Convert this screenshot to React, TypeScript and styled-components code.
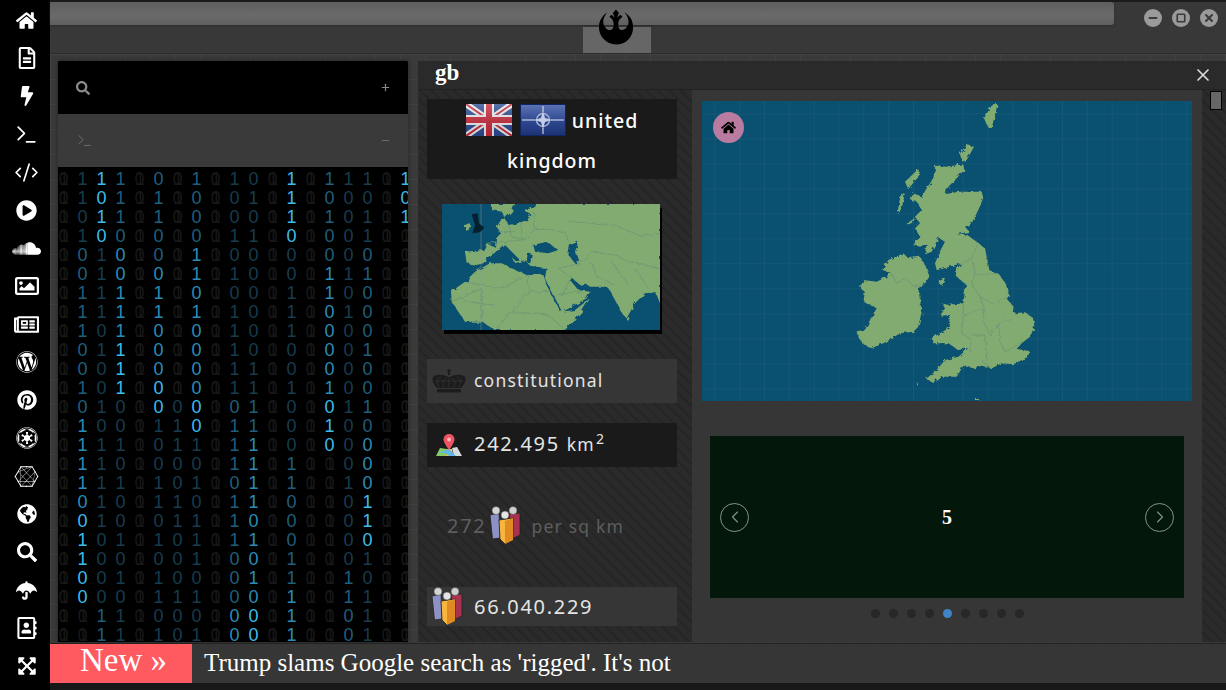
import styled, { createGlobalStyle } from "styled-components";
import {
  FaHome, FaRegFileAlt, FaBolt, FaPlayCircle, FaSoundcloud, FaRegImage, FaRegNewspaper,
  FaWordpress, FaPinterest, FaConnectdevelop, FaGlobeAmericas, FaSearch,
  FaUmbrella, FaRegAddressBook, FaExpandArrowsAlt, FaRebel, FaEmpire,
} from "react-icons/fa";
import { Terminal, CodeXml, Minus, Square, X, Plus, ChevronLeft, ChevronRight } from "lucide-react";

const GlobalStyle = createGlobalStyle`
  html, body { margin: 0; padding: 0; background: #363636; overflow: hidden; }
  * { box-sizing: border-box; }
`;

const HATCH = `repeating-linear-gradient(45deg, #2a2a2a 0 6px, #252525 6px 8px)`;
const LEVELS = ["#171717", "#173c4e", "#1f5f7d", "#2a8db8", "#3cbdec"];

const col = (chars: string, levels: string) => ({ chars, levels });
const blank = () => col("x".repeat(25), "0".repeat(25));

const COLUMNS = [
  blank(),
  col("11010011100101111001100xx", "1111222222222333334444400"),
  col("1010111101001011111000011", "4444" + "1".repeat(19) + "22"),
  col("1110001111110010100101011", "2222" + "33333" + "444" + "1".repeat(13)),
  blank(),
  col("0110001100000100110101101", "22222" + "333333" + "44" + "1".repeat(12)),
  col("x".repeat(12) + "0110011000100", "0".repeat(12) + "1".repeat(13)),
  col("1000110100000010101110101", "2222" + "33333333" + "44" + "1".repeat(11)),
  blank(),
  col("1001010111110111011100000", "1".repeat(12) + "2".repeat(11) + "33"),
  col("0101000000111111110101000", "1".repeat(12) + "22" + "3".repeat(9) + "44"),
  blank(),
  col("1110001110010001100011111", "4444" + "1".repeat(11) + "2".repeat(7) + "333"),
  blank(),
  col("101001100001010" + "x".repeat(10), "22222" + "3333333" + "444" + "0".repeat(10)),
  col("1000010100001000100001100", "1".repeat(21) + "2222"),
  col("1011010001001000011010111", "1111" + "2".repeat(10) + "333" + "444" + "11111"),
  blank(),
  col("101" + "x".repeat(22), "444" + "0".repeat(22)),
];

const NAV_ICONS = [
  <FaHome size={21} />, <FaRegFileAlt size={22} />, <FaBolt size={20} />, <Terminal size={25} strokeWidth={1.6} />,
  <CodeXml size={25} strokeWidth={1.6} />, <FaPlayCircle size={21} />, <FaSoundcloud size={29} />, <FaRegImage size={24} />,
  <FaRegNewspaper size={25} />, <FaWordpress size={22} />, <FaPinterest size={20} />, <FaEmpire size={22} />,
  <FaConnectdevelop size={25} />, <FaGlobeAmericas size={20} />, <FaSearch size={20} />, <FaUmbrella size={21} />,
  <FaRegAddressBook size={22} />, <FaExpandArrowsAlt size={20} />,
];

const Shell = styled.div`
  display: grid;
  grid-template-columns: 50px 1fr;
  grid-template-rows: 690px;
  width: 1226px;
  height: 690px;
  overflow: hidden;
  font-family: "Liberation Serif", serif;
`;
const Sidebar = styled.nav`
  background: #000;
  color: #fff;
  padding-top: 1px;
  display: flex;
  flex-direction: column;
`;
const NavItem = styled.div`
  height: 38px;
  flex: none;
  display: flex;
  align-items: center;
  justify-content: center;
  padding-left: 3px;
`;
const Main = styled.div`
  display: flex;
  flex-direction: column;
  min-width: 0;
  min-height: 0;
`;
const TopBar = styled.header`
  height: 54px;
  flex: none;
  display: flex;
  background: #383838;
  border-top: 2px solid #1d1a1d;
  border-bottom: 1px solid #2c2c2c;
`;
const TitleColumn = styled.div`
  width: 1064px;
  display: flex;
  flex-direction: column;
`;
const TitleStrip = styled.div`
  height: 23px;
  background: linear-gradient(#5f5f5f, #6a6a6a 60%, #606060);
  border-radius: 0 3px 3px 0;
  box-shadow: 0 1px 2px #2c2c2c;
`;
const Tab = styled.div`
  position: relative;
  margin: 2px 0 0 533px;
  width: 68px;
  height: 26px;
  background: #666;
`;
const RebelMark = styled.div`
  position: absolute;
  left: 15px;
  top: -18px;
  color: #000;
  line-height: 0;
`;
const Controls = styled.div`
  margin-left: auto;
  padding: 7px 8px 0 0;
  display: flex;
  gap: 10px;
`;
const ControlButton = styled.div`
  width: 18px;
  height: 18px;
  border-radius: 50%;
  background: #9a9a9a;
  color: #3a3a3a;
  display: flex;
  align-items: center;
  justify-content: center;
`;
const Workspace = styled.div`
  flex: 1;
  min-height: 0;
  display: flex;
  gap: 10px;
  padding: 7px 0 1px 8px;
  background-color: #3a3a3a;
  background-image:
    linear-gradient(rgba(255, 255, 255, 0.035) 1px, transparent 1px),
    linear-gradient(90deg, rgba(255, 255, 255, 0.035) 1px, transparent 1px);
  background-size: 25px 25px;
`;
const LeftPanel = styled.section`
  width: 350px;
  flex: none;
  display: flex;
  flex-direction: column;
  background: #000;
  overflow: hidden;
  border-radius: 2px 2px 0 0;
  box-shadow: 0 0 4px #222;
`;
const PanelRow = styled.div<{ $active?: boolean }>`
  height: 53px;
  flex: none;
  padding: 0 17px 0 18px;
  display: flex;
  align-items: center;
  justify-content: space-between;
  color: ${(p) => (p.$active ? "#6d6d6d" : "#8a8a8a")};
  background: ${(p) => (p.$active ? "#3a3a3a" : "#000")};
`;
const Matrix = styled.div`
  display: grid;
  grid-auto-flow: column;
  grid-template-rows: repeat(25, 19px);
  grid-auto-columns: 19px;
  padding-top: 3px;
  margin-left: -4px;
  font: 18px/19px "Liberation Sans", sans-serif;
`;
const Bit = styled.span<{ $level: number }>`
  position: relative;
  text-align: center;
  color: ${(p) => LEVELS[p.$level]};
`;
const BitGhost = styled.span`
  position: absolute;
  left: 1px;
  right: 0;
  top: 0;
`;
const RightPanel = styled.section`
  flex: 1;
  min-width: 0;
  min-height: 0;
  display: flex;
  flex-direction: column;
  border-left: 1px solid #2a2a2a;
`;
const PanelHeader = styled.div`
  height: 29px;
  flex: none;
  display: flex;
  align-items: center;
  justify-content: space-between;
  padding: 0 13px 0 16px;
  background: #2a2a2a;
  color: #fff;
  border-bottom: 1px solid #222;
`;
const PanelTitle = styled.h2`
  margin: 0;
  padding-bottom: 6px;
  font: bold 23px/23px "Liberation Serif", serif;
`;
const PanelBody = styled.div`
  flex: 1;
  min-height: 0;
  display: grid;
  grid-template-columns: 273px 510px 1fr;
`;
const InfoColumn = styled.div`
  background: ${HATCH};
  padding: 9px 15px 0 8px;
  display: flex;
  flex-direction: column;
`;
const CountryTitle = styled.div`
  height: 80px;
  flex: none;
  background: #1a1a1a;
  color: #fff;
  text-align: center;
  font: 500 19.5px/40px "Noto Sans", sans-serif;
  letter-spacing: 1px;
  padding-top: 2px;
`;
const FlagImage = styled.svg`
  width: 46px;
  height: 32px;
  vertical-align: middle;
  margin: -5px 6px 0 0;
  & + & {
    margin-left: 2px;
  }
`;
const MiniMap = styled.svg`
  display: block;
  flex: none;
  width: 218px;
  height: 126px;
  margin: 25px 0 4px 15px;
  box-shadow: 2px 4px 0 #000;
`;
const InfoRow = styled.div<{ $tone: "light" | "dark" | "none"; $height: number; $top: number }>`
  flex: none;
  display: flex;
  align-items: center;
  height: ${(p) => p.$height}px;
  margin-top: ${(p) => p.$top}px;
  padding-left: ${(p) => (p.$tone === "none" ? 20 : 47)}px;
  position: relative;
  color: ${(p) => (p.$tone === "none" ? "#5e5e5e" : "#e4e4e4")};
  background: ${(p) => (p.$tone === "light" ? "#363636" : p.$tone === "dark" ? "#1a1a1a" : "transparent")};
  font: 400 20px "Noto Sans", sans-serif;
  letter-spacing: 1.7px;
`;
const RowIcon = styled.div<{ $left: number }>`
  position: absolute;
  left: ${(p) => p.$left}px;
  top: 0;
  bottom: 0;
  display: flex;
  align-items: center;
`;
const RowText = styled.span`
  padding-bottom: 3px;
`;
const InlineIcon = styled.span`
  display: flex;
  margin-left: 3px;
  padding-top: 1px;
`;
const SmallText = styled.span<{ $gap?: number }>`
  font-size: 17.5px;
  letter-spacing: 1.2px;
  padding-left: ${(p) => p.$gap ?? 0}px;
`;
const Superscript = styled.sup`
  font-size: 14px;
  line-height: 0;
  margin-left: 1px;
`;
const MapColumn = styled.div`
  background: #363636;
  padding: 11px 10px 0;
`;
const MapFrame = styled.div`
  position: relative;
  height: 300px;
`;
const BigMap = styled.svg`
  display: block;
  width: 490px;
  height: 300px;
`;
const HomeButton = styled.div`
  position: absolute;
  left: 11px;
  top: 11px;
  width: 31px;
  height: 31px;
  border-radius: 50%;
  background: #b97b9f;
  color: #000;
  display: flex;
  align-items: center;
  justify-content: center;
`;
const CarouselWrap = styled.div`
  width: 474px;
  margin: 35px 0 0 8px;
`;
const Carousel = styled.div`
  height: 162px;
  background: #03170a;
  display: flex;
  align-items: center;
  justify-content: space-between;
  padding: 0 10px;
  color: #fff;
`;
const SlideNumber = styled.span`
  font: bold 20px "Liberation Serif", serif;
`;
const ArrowButton = styled.div`
  width: 29px;
  height: 29px;
  border: 1.5px solid #84958a;
  border-radius: 50%;
  color: #84958a;
  display: flex;
  align-items: center;
  justify-content: center;
`;
const Dots = styled.div`
  display: flex;
  justify-content: center;
  gap: 9px;
  margin-top: 11px;
`;
const Dot = styled.span<{ $active: boolean }>`
  width: 9px;
  height: 9px;
  border-radius: 50%;
  background: ${(p) => (p.$active ? "#3f86c8" : "#272727")};
`;
const ScrollColumn = styled.div`
  background: ${HATCH};
  padding: 1px 4px 0 8px;
`;
const ScrollThumb = styled.div`
  width: 12px;
  height: 19px;
  background: #666;
  border: 1px solid #000;
`;
const Ticker = styled.footer`
  height: 40px;
  flex: none;
  display: flex;
  align-items: center;
  background: #363636;
  border-top: 1px solid #222;
  color: #fff;
`;
const TickerLabel = styled.div`
  width: 142px;
  height: 100%;
  padding-left: 5px;
  background: #ff5a5f;
  text-align: center;
  font: 33px/33px "Liberation Serif", serif;
`;
const TickerText = styled.div`
  padding: 0 0 2px 12px;
  font: 25px "Liberation Serif", serif;
`;
const BottomEdge = styled.div`
  height: 7px;
  flex: none;
  background: #181818;
`;

const UkFlag = () => (
  <FlagImage viewBox="0 0 46 32">
    <defs>
      <linearGradient id="flagShade" x1="0" y1="0" x2="0" y2="1">
        <stop offset="0" stopColor="#fff" stopOpacity="0.22" />
        <stop offset="1" stopColor="#000" stopOpacity="0.12" />
      </linearGradient>
    </defs>
    <rect width="46" height="32" fill="#2c4a92" />
    <path d="M0 0L46 32M46 0L0 32" stroke="#eee" strokeWidth="6" />
    <path d="M0 0L46 32M46 0L0 32" stroke="#c8283a" strokeWidth="2" />
    <path d="M23 0V32M0 16H46" stroke="#eee" strokeWidth="10" />
    <path d="M23 0V32M0 16H46" stroke="#c8283a" strokeWidth="6" />
    <rect width="46" height="32" fill="url(#flagShade)" />
  </FlagImage>
);

const NatoFlag = () => (
  <FlagImage viewBox="0 0 46 32">
    <defs>
      <linearGradient id="natoShade" x1="0" y1="0" x2="0" y2="1">
        <stop offset="0" stopColor="#5c74b4" />
        <stop offset="0.55" stopColor="#2d468f" />
        <stop offset="1" stopColor="#1c3274" />
      </linearGradient>
    </defs>
    <rect x="0.5" y="0.5" width="45" height="31" fill="url(#natoShade)" stroke="#10245e" />
    <path d="M2 16H15M31 16H44M23 2V8M23 24V30" stroke="#e8ecf5" strokeWidth="1" />
    <circle cx="23" cy="16" r="6.5" fill="none" stroke="#a9b5d8" strokeWidth="1.4" />
    <path d="M23 7L25 14L32 16L25 18L23 25L21 18L14 16L21 14Z" fill="#c5cee6" />
  </FlagImage>
);

const CrownIcon = () => (
  <svg width="34" height="24" viewBox="0 0 34 24">
    <g fill="#1c1c1c">
      <circle cx="17" cy="1.8" r="1.8" />
      <rect x="16" y="2" width="2" height="4" />
      <path d="M5 19C0 14 -1 8 3 6.5C8 5 13 6 17 8.5C21 6 26 5 31 6.5C35 8 34 14 29 19Z" />
      <rect x="5" y="20" width="24" height="3.5" rx="1" />
    </g>
    <path d="M7 18C4 13 5 9 9 8M12 18C10 13 11 10 15 9M22 18C24 13 23 10 19 9M27 18C30 13 29 9 25 8M17 9V18M3 12H31" fill="none" stroke="#363636" strokeWidth="0.8" />
  </svg>
);

const MapPinIcon = () => (
  <svg width="26" height="22" viewBox="0 0 26 22">
    <path d="M4 14L0 22H10L11 15Z" fill="#86cc62" />
    <path d="M11 15L10 22H17L16 15Z" fill="#f5c64b" />
    <path d="M16 14L18 22H26L21 13Z" fill="#d6dadc" />
    <path d="M2 19L13 15L20 22H13L9 19Z" fill="#5fb8e8" />
    <path d="M13 0C9.500 0 7.500 2.500 7.500 5.500C7.500 9 13 16 13 16C13 16 18.500 9 18.500 5.500C18.500 2.500 16.500 0 13 0Z" fill="#ec5362" />
    <circle cx="13" cy="5.500" r="2" fill="#f7b6bc" />
  </svg>
);

const PeopleIcon = () => (
  <svg width="33" height="40" viewBox="0 0 33 40">
    <path d="M1 9L10 7L11 32L3.500 33Z" fill="#8c92c6" stroke="#222" strokeWidth="0.8" />
    <path d="M20 8L31 7V29L23 33Z" fill="#a8324f" stroke="#222" strokeWidth="0.8" />
    <path d="M10 14L24 12L24 34L16 38L11 33Z" fill="#f8b63e" stroke="#222" strokeWidth="0.8" />
    <path d="M16 15L24 12L24 34L16 38Z" fill="#e08a22" />
    <circle cx="7" cy="4.500" r="4" fill="#d4d4d4" stroke="#333" strokeWidth="0.5" />
    <circle cx="16" cy="9" r="4" fill="#e4e4e4" stroke="#333" strokeWidth="0.5" />
    <circle cx="24" cy="4.500" r="4" fill="#cfcfcf" stroke="#333" strokeWidth="0.5" />
  </svg>
);

const WorldMap = () => (
  <MiniMap viewBox="81 447 654 378">
    <defs>
      <filter id="miniCoast" x="-5%" y="-5%" width="110%" height="110%" colorInterpolationFilters="sRGB">
        <feTurbulence type="fractalNoise" baseFrequency="0.06" numOctaves="2" seed="9" />
        <feDisplacementMap in="SourceGraphic" scale="14" />
      </filter>
    </defs>
    <rect x="81" y="447" width="654" height="378" fill="#0a5070" />
    <g filter="url(#miniCoast)">
      <g fill="#82ab72">
        <path d="M150 590L205 585L215 565L240 575L243 550L258 535L245 515L258 495L270 495L262 470L228 465L228 447L300 447L290 470L270 490L280 510L330 500L350 480L325 465L355 458L360 447L735 447L735 745L722 712L690 715L660 745L635 790L620 775L600 735L580 700L560 695L525 695L510 685L495 690L470 668L465 675L490 705L525 710L515 730L470 755L442 772L415 720L390 670L395 640L345 632L330 615L300 625L290 600L265 575L250 590L225 600L205 625L185 630L155 625Z" />
        <path d="M150 680L180 650L225 625L260 625L290 640L340 660L385 660L400 700L435 770L480 765L525 730L500 770L450 825L240 825L200 800L150 800L110 740L108 710Z" />
        <path d="M150 510L165 503L168 515L150 525Z" />
        <path d="M636 790L642 785L645 798L638 800Z" />
      </g>
      <g fill="#0a5070">
        <path d="M355 570L395 560L430 585L400 595L360 590Z" />
        <path d="M465 570L490 560L480 590L495 620L480 625L460 600Z" />
        <path d="M270 570L312 612L302 618L264 580Z" />
        <path d="M338 595L350 598L345 628L335 620Z" />
      </g>
      <g fill="none" stroke="#6b9575" strokeWidth="2.5">
        <path d="M215 565L258 560L330 555L360 520L450 530L460 560M540 505L600 510L680 545L735 535M495 625L530 590L600 600L640 620L735 640M530 625L545 665L600 690M590 620L640 690" />
        <path d="M150 680L260 700L340 660V710L290 770L240 825M340 710L400 710M290 770L400 780M200 700V800M430 640L470 668L440 720" />
        <path d="M280 510L290 545L330 555M250 530L300 530M320 500V555M360 520L355 470M460 500L540 505M430 640L495 625M660 640L700 700M150 740L240 750M110 740L200 700M420 720L500 710M400 780L450 825" />
      </g>
    </g>
    <path d="M198 447V825" stroke="#8a9a9a" strokeOpacity="0.7" strokeWidth="2" />
    <path d="M170 478L188 475L192 505L208 518L195 532L172 535L180 510Z" fill="#07202e" />
  </MiniMap>
);

const UkMap = () => (
  <BigMap viewBox="6 18 1470 900">
    <defs>
      <pattern id="mapGrid" x="43" y="55" width="74.5" height="75" patternUnits="userSpaceOnUse">
        <path d="M0 75V0H74.5" fill="none" stroke="#fff" strokeOpacity="0.08" strokeWidth="3" />
      </pattern>
      <filter id="coast" x="-5%" y="-5%" width="110%" height="110%" colorInterpolationFilters="sRGB">
        <feTurbulence type="fractalNoise" baseFrequency="0.09" numOctaves="2" seed="4" />
        <feDisplacementMap in="SourceGraphic" scale="13" />
      </filter>
    </defs>
    <rect x="6" y="18" width="1470" height="900" fill="#0a5070" />
    <rect x="6" y="18" width="1470" height="900" fill="url(#mapGrid)" />
    <g filter="url(#coast)">
      <g fill="#82ab72">
        <path d="M706 212L740 215L790 208L793 225L770 250L745 275L735 298L775 290L845 290L850 308L835 345L815 385L795 395L808 410L770 418L800 420L830 440L855 460L868 525L900 540L918 570L930 605L920 610L940 635L942 655L975 652L1000 670L1003 695L990 725L965 745L950 762L988 768L985 785L940 808L905 805L875 820L845 812L820 820L790 812L770 845L720 845L700 862L678 852L710 825L735 795L775 785L805 760L775 765L745 745L700 745L695 730L745 700L750 660L720 662L735 640L725 625L745 630L790 625L795 590L800 570L770 545L768 525L785 505L765 510L735 520L710 525L705 505L722 465L735 440L715 428L695 470L675 478L680 445L660 455L640 450L660 425L645 400L660 385L645 365L665 345L650 320L632 315L640 295L665 305L680 280L700 250Z" />
        <path d="M610 475L625 490L660 485L680 520L688 545L675 565L655 580L665 650L655 695L640 710L600 715L560 740L515 760L485 745L470 708L495 705L510 675L530 640L490 620L495 590L480 580L490 555L530 560L560 545L570 530L545 525L565 495Z" />
        <path d="M655 222L658 240L625 283L615 260Z" />
        <path d="M605 292L615 295L605 340L592 358L598 320Z" />
        <path d="M885 22L892 30L875 100L865 100L852 70L870 40Z" />
        <path d="M780 175L800 150L822 155L800 195L785 200Z" />
        <path d="M725 548L735 550L725 570L717 568Z" />
        <path d="M620 385L645 370L640 380L625 390Z" />
        <path d="M828 912H838V918H828Z" />
        <path d="M648 863H653V868H648Z" />
      </g>
      <g fill="none" stroke="#6d9376" strokeWidth="2.5">
        <path d="M830 440L825 470L805 495L770 510" />
        <path d="M570 530L590 565L620 548L640 575L670 570" />
        <path d="M815 490L825 530L815 570L840 605L852 640L850 680L870 720L905 680L940 670" />
        <path d="M825 540L890 535M840 605L875 625L930 605" />
        <path d="M790 625L790 660L850 640M790 660L785 715L815 735L810 770" />
        <path d="M815 720L855 720L860 790L845 800L870 815M895 680L900 740L915 770L960 745" />
      </g>
    </g>
  </BigMap>
);

const App = () => (
  <>
    <GlobalStyle />
    <Shell>
      <Sidebar>
        {NAV_ICONS.map((icon, i) => (
          <NavItem key={i}>{icon}</NavItem>
        ))}
      </Sidebar>
      <Main>
        <TopBar>
          <TitleColumn>
            <TitleStrip />
            <Tab>
              <RebelMark>
                <FaRebel size={36} />
              </RebelMark>
            </Tab>
          </TitleColumn>
          <Controls>
            <ControlButton><Minus size={12} strokeWidth={4} /></ControlButton>
            <ControlButton><Square size={10} strokeWidth={4} /></ControlButton>
            <ControlButton><X size={12} strokeWidth={4} /></ControlButton>
          </Controls>
        </TopBar>
        <Workspace>
          <LeftPanel>
            <PanelRow>
              <FaSearch size={14} />
              <Plus size={11} strokeWidth={2.5} />
            </PanelRow>
            <PanelRow $active>
              <Terminal size={17} strokeWidth={1.4} />
              <Minus size={11} strokeWidth={2.5} />
            </PanelRow>
            <Matrix>
              {COLUMNS.flatMap((c, x) =>
                c.chars.split("").map((ch, y) => (
                  <Bit key={`${x}-${y}`} $level={Number(c.levels[y])}>
                    {ch === "x" ? "0" : ch}
                    {ch === "x" && <BitGhost>1</BitGhost>}
                  </Bit>
                ))
              )}
            </Matrix>
          </LeftPanel>
          <RightPanel>
            <PanelHeader>
              <PanelTitle>gb</PanelTitle>
              <X size={20} strokeWidth={2} color="#dcdcdc" />
            </PanelHeader>
            <PanelBody>
              <InfoColumn>
                <CountryTitle>
                  <UkFlag />
                  <NatoFlag />
                  united kingdom
                </CountryTitle>
                <WorldMap />
                <InfoRow $tone="light" $height={44} $top={25}>
                  <RowIcon $left={5}><CrownIcon /></RowIcon>
                  <RowText><SmallText>constitutional</SmallText></RowText>
                </InfoRow>
                <InfoRow $tone="dark" $height={44} $top={20}>
                  <RowIcon $left={9}><MapPinIcon /></RowIcon>
                  <RowText>242.495 <SmallText>km<Superscript>2</Superscript></SmallText></RowText>
                </InfoRow>
                <InfoRow $tone="none" $height={41} $top={38}>
                  272
                  <InlineIcon><PeopleIcon /></InlineIcon>
                  <SmallText $gap={9}>per sq km</SmallText>
                </InfoRow>
                <InfoRow $tone="light" $height={39} $top={41}>
                  <RowIcon $left={4}><PeopleIcon /></RowIcon>
                  66.040.229
                </InfoRow>
              </InfoColumn>
              <MapColumn>
                <MapFrame>
                  <UkMap />
                  <HomeButton><FaHome size={15} /></HomeButton>
                </MapFrame>
                <CarouselWrap>
                  <Carousel>
                    <ArrowButton><ChevronLeft size={20} strokeWidth={1.3} /></ArrowButton>
                    <SlideNumber>5</SlideNumber>
                    <ArrowButton><ChevronRight size={20} strokeWidth={1.3} /></ArrowButton>
                  </Carousel>
                  <Dots>
                    {Array.from({ length: 9 }, (_, i) => (
                      <Dot key={i} $active={i === 4} />
                    ))}
                  </Dots>
                </CarouselWrap>
              </MapColumn>
              <ScrollColumn>
                <ScrollThumb />
              </ScrollColumn>
            </PanelBody>
          </RightPanel>
        </Workspace>
        <Ticker>
          <TickerLabel>New »</TickerLabel>
          <TickerText>Trump slams Google search as 'rigged'. It's not</TickerText>
        </Ticker>
        <BottomEdge />
      </Main>
    </Shell>
  </>
);

export default App;
